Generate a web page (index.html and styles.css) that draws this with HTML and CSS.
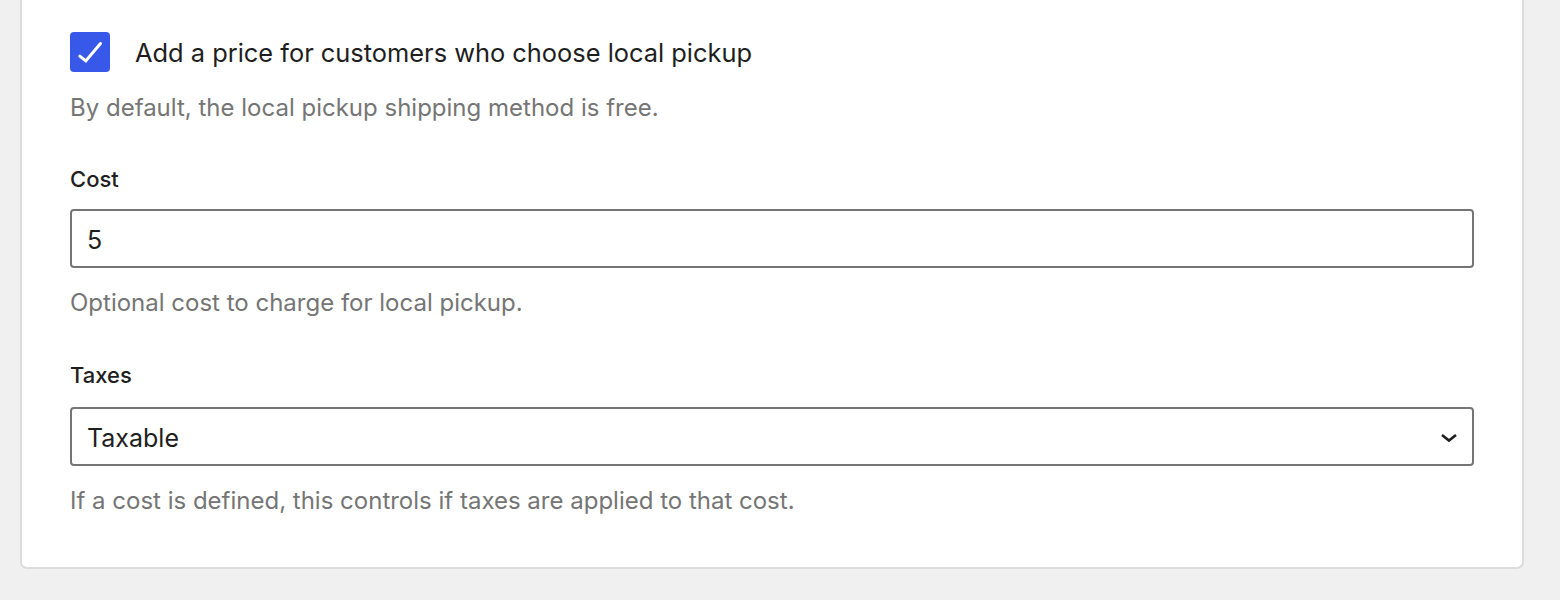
FILE: index.html
```html
<!DOCTYPE html>
<html>
<head>
<meta charset="utf-8">
<link rel="stylesheet" href="styles.css">
</head>
<body>
<div class="card">
  <label class="check-row">
    <span class="checkbox">
      <svg width="40" height="40" viewBox="0 0 40 40"><path d="M9.8 24.2 L15.8 29 L30.5 11.5" fill="none" stroke="#fff" stroke-width="3" stroke-linecap="round" stroke-linejoin="miter"/></svg>
    </span>
    <span class="check-label">Add a price for customers who choose local pickup</span>
  </label>
  <p class="help help-first">By default, the local pickup shipping method is free.</p>

  <div class="field field-cost">
    <div class="field-label">Cost</div>
    <div class="control"><span class="value">5</span></div>
    <p class="help">Optional cost to charge for local pickup.</p>
  </div>

  <div class="field field-taxes">
    <div class="field-label">Taxes</div>
    <div class="control select"><span class="value">Taxable</span>
      <svg class="chev" width="18" height="12" viewBox="0 0 18 12"><path d="M2 3 L9 8.5 L16 3" fill="none" stroke="#1e1e1e" stroke-width="2.6"/></svg>
    </div>
    <p class="help">If a cost is defined, this controls if taxes are applied to that cost.</p>
  </div>
</div>
</body>
</html>
```
FILE: styles.css
```css
* { box-sizing: border-box; }
html, body {
  margin: 0;
  padding: 0;
  background: #f0f0f0;
  font-family: Inter, "Noto Sans", sans-serif;
  color: #1e1e1e;
}
.card {
  margin-left: 20px;
  width: 1504px;
  background: #fff;
  border: 2px solid #dcdcdc;
  border-top: none;
  border-radius: 0 0 7px 7px;
  padding: 32px 48px 50px 48px;
}
.check-row {
  display: flex;
  align-items: center;
  gap: 25px;
  height: 40px;
}
.checkbox {
  width: 40px;
  height: 40px;
  border-radius: 4px;
  background: #3858e9;
  display: block;
  flex: none;
}
.checkbox svg { display: block; }
.check-label {
  font-size: 25.4px;
}
.help {
  margin: 0;
  font-size: 24px;
  color: #757575;
  line-height: 32px;
}
.help-first {
  margin-top: 20px;
}
.field-label {
  font-size: 22px;
  font-weight: 500;
  line-height: 28px;
}
.field-cost .field-label { margin-top: 41px; }
.field-cost .control { margin-top: 16px; }
.field-taxes .field-label { margin-top: 42px; }
.field-taxes .control { margin-top: 18px; }
.control {
  height: 59px;
  border: 2px solid #757575;
  border-radius: 4px;
  display: flex;
  align-items: center;
  padding: 0 14px 0 15px;
  font-size: 25px;
}
.value { margin-top: 2px; }
.select { justify-content: space-between; }
.chev { margin-top: 2px; }
.field .help { margin-top: 19px; }
```
